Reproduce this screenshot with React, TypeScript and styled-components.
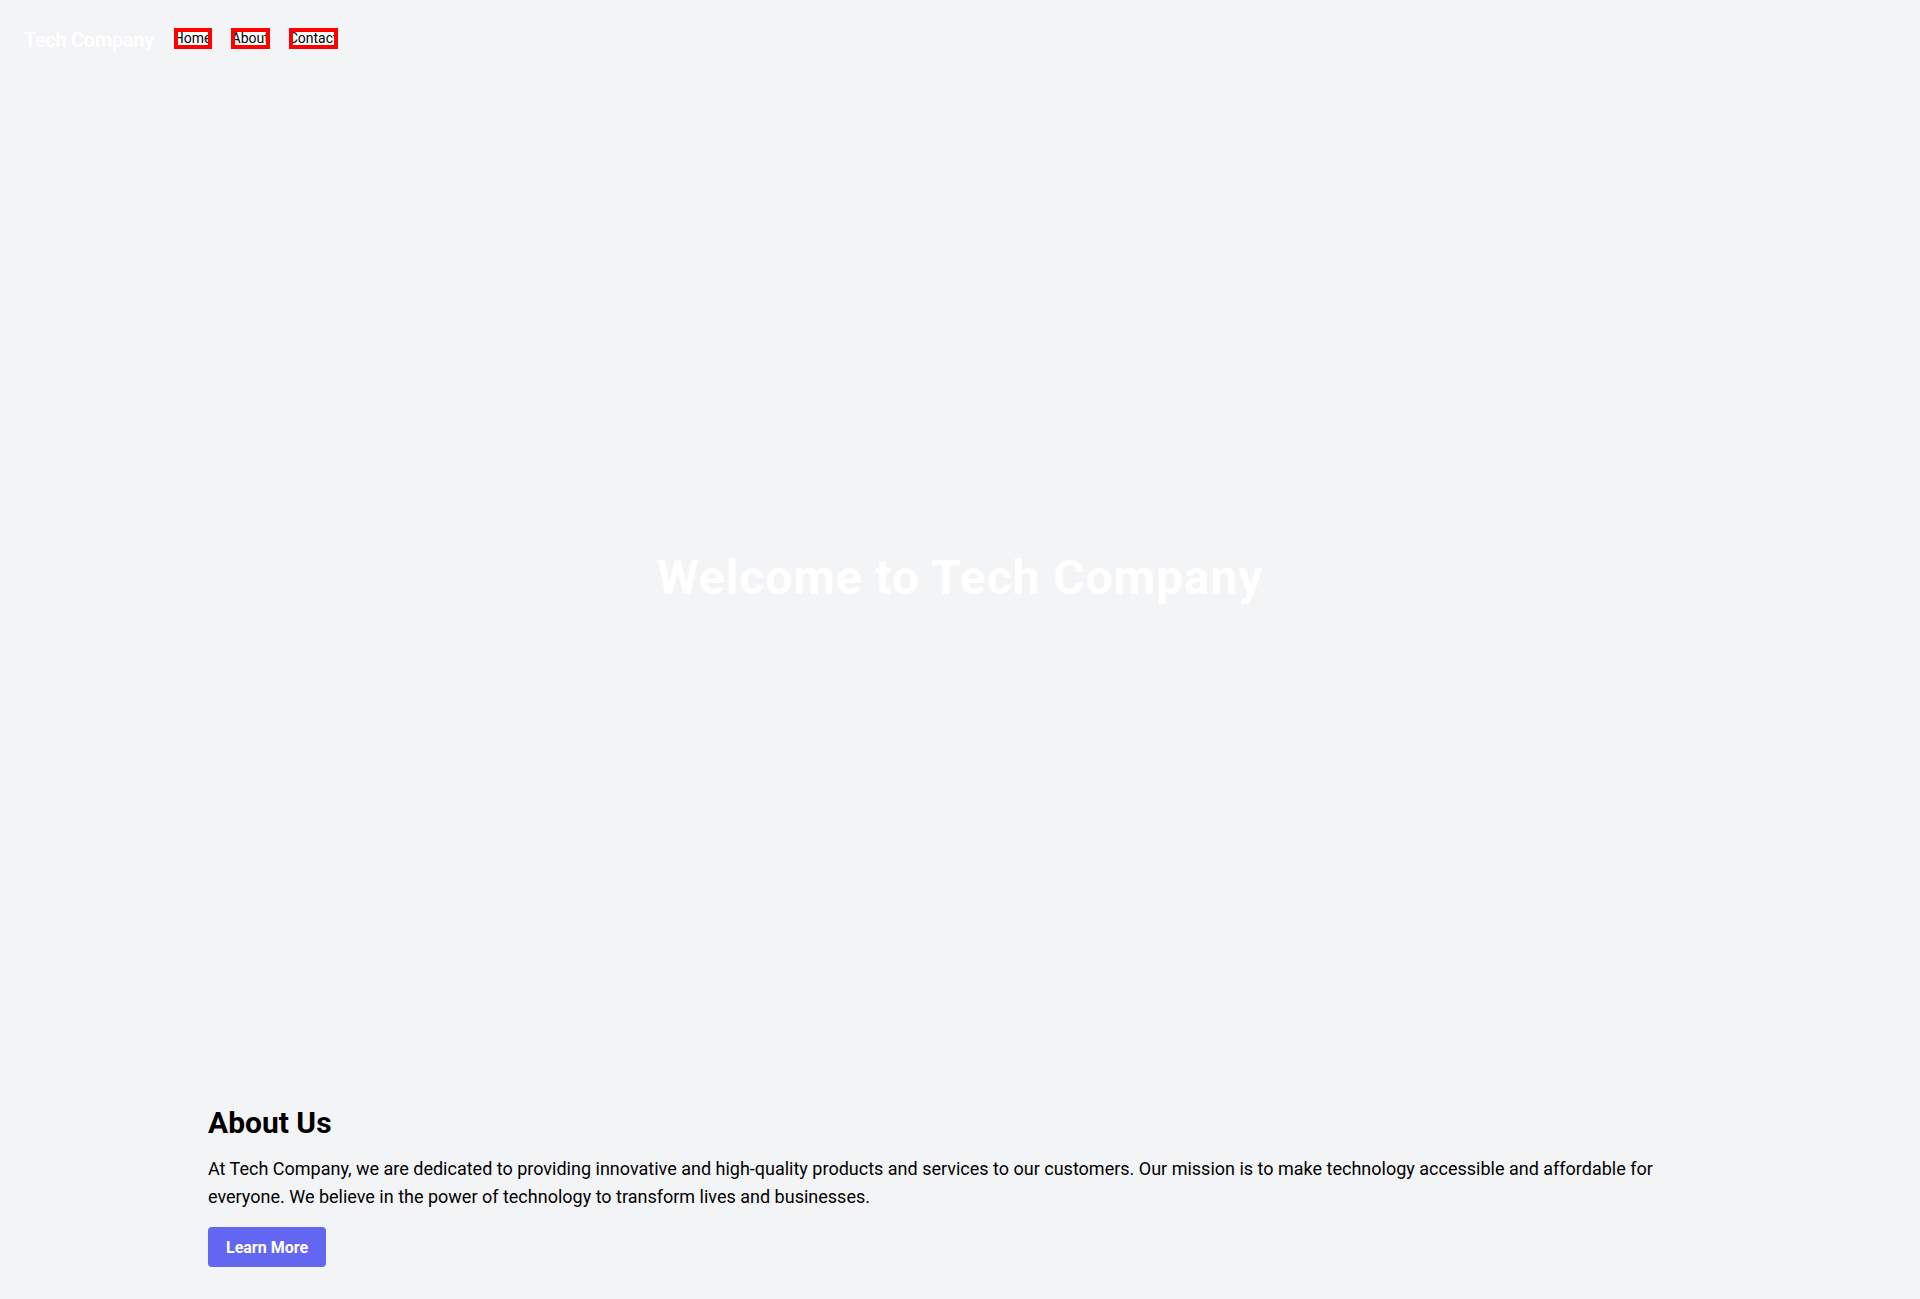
import styled, { createGlobalStyle } from 'styled-components';

const GlobalStyle = createGlobalStyle`
	html, body {
		margin: 0;
		padding: 0;
	}
	body {
		background: #f3f4f6;
		font-family: 'Segoe UI', Roboto, 'Noto Sans', sans-serif;
		color: #000;
	}
	* {
		box-sizing: border-box;
	}
`;

const links = [
	{ label: 'Home', width: 30 },
	{ label: 'About', width: 31 },
	{ label: 'Contact', width: 41 },
];

export default function App() {
	return (
		<>
			<GlobalStyle />
			<Page>
				<Header>
					<Brand>Tech Company</Brand>
					<Nav>
						{links.map((link) => (
							<NavLink key={link.label} href="#" $width={link.width}>
								{link.label}
							</NavLink>
						))}
					</Nav>
				</Header>
				<Hero>
					<HeroTitle>Welcome to Tech Company</HeroTitle>
				</Hero>
				<About>
					<AboutTitle>About Us</AboutTitle>
					<AboutText>
						At Tech Company, we are dedicated to providing innovative and high-quality products and
						services to our customers. Our mission is to make technology accessible and affordable for
						everyone. We believe in the power of technology to transform lives and businesses.
					</AboutText>
					<LearnButton>Learn More</LearnButton>
				</About>
			</Page>
		</>
	);
}

const Page = styled.div`
	min-height: 1299px;
	display: flex;
	flex-direction: column;
`;

const Header = styled.header`
	display: flex;
	align-items: center;
	height: 76px;
	padding: 0 24px;
	gap: 20px;
`;

const Brand = styled.div`
	color: #fff;
	font-size: 20px;
	line-height: 28px;
	padding-top: 3px;
	font-weight: 500;
	letter-spacing: -0.3px;
`;

const Nav = styled.nav`
	display: flex;
	align-items: center;
	gap: 19px;
`;

const NavLink = styled.a<{ $width: number }>`
	display: flex;
	justify-content: center;
	align-items: center;
	width: ${({ $width }) => $width + 8}px;
	height: 21px;
	border: 4px solid #ff0000;
	background: #fff;
	overflow: hidden;
	color: #000;
	text-decoration: none;
	font-size: 14px;
	line-height: 13px;
	white-space: nowrap;
`;

const Hero = styled.section`
	flex: 1;
	display: flex;
	align-items: center;
	justify-content: center;
	padding-top: 8px;
`;

const HeroTitle = styled.h1`
	margin: 0;
	color: #fff;
	font-size: 48px;
	line-height: 1;
	font-weight: 700;
	letter-spacing: 0.9px;
`;

const About = styled.section`
	width: 100%;
	max-width: 1536px;
	margin: 0 auto;
	padding: 32px 16px;
`;

const AboutTitle = styled.h2`
	margin: 0 0 14px;
	padding-top: 2px;
	font-size: 30px;
	line-height: 36px;
	font-weight: 700;
`;

const AboutText = styled.p`
	margin: 0 0 16px;
	font-size: 18px;
	line-height: 28px;
`;

const LearnButton = styled.button`
	height: 40px;
	padding: 0 18px;
	border: none;
	border-radius: 4px;
	background: #6366f1;
	color: #fff;
	font-family: inherit;
	font-size: 16px;
	font-weight: 700;
	cursor: pointer;
`;
